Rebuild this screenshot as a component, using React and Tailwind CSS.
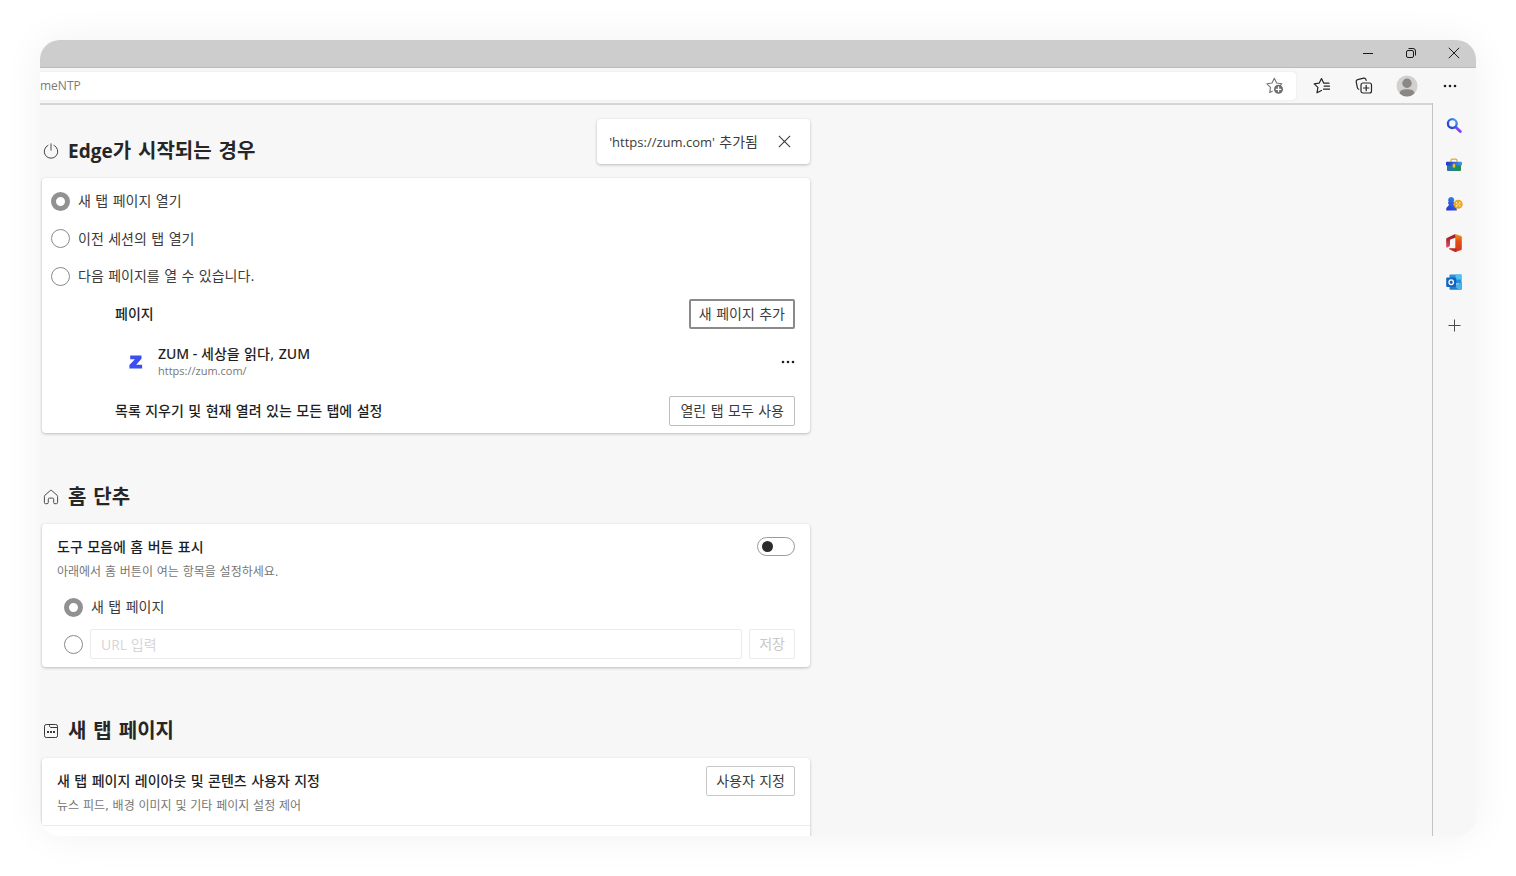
import React, { useState } from "react";

const LATIN = "font-['Open_Sans','Noto_Sans_CJK_KR',sans-serif]";
const LATIN_TITLE = "font-['Noto_Sans','Noto_Sans_CJK_KR',sans-serif]";
const HANGUL = "font-['DejaVu_Sans','Noto_Sans_CJK_KR',sans-serif]";

function StarPlusIcon() {
  return (
    <svg width="18" height="18" viewBox="0 0 18 18" fill="none" stroke="#767676" strokeWidth="1.1" strokeLinejoin="round" strokeLinecap="round">
      <path d="M6.3 14.2l-2.600 1.400.8-5.300L.9 6.800l5.100-.8L8.300 1.300 10.600 6l5.200.8-1.400 1.300" />
      <circle cx="12.500" cy="12.300" r="4.500" fill="#6e6e6e" stroke="none" />
      <path d="M12.500 10v4.600M10.200 12.300h4.600" stroke="#fff" strokeWidth="1.300" />
    </svg>
  );
}

function FavoritesIcon() {
  return (
    <svg width="18" height="18" viewBox="0 0 18 18" fill="none" stroke="#262626" strokeWidth="1.2" strokeLinejoin="round" strokeLinecap="round">
      <path d="M8.500 13.500L4 15.800l.9-5.400L1.200 6.900l4.900-.7L8.500 1.600l2.300 4.600H16M11.200 9.200H16.500M10.500 12.200h6" />
    </svg>
  );
}

function CollectionsIcon() {
  return (
    <svg width="18" height="18" viewBox="0 0 18 18" fill="none" stroke="#262626" strokeWidth="1.2" strokeLinejoin="round" strokeLinecap="round">
      <rect x="6" y="6" width="10.500" height="10" rx="2" />
      <path d="M11.200 8.300v5.400M8.500 11h5.400" />
      <path d="M3.800 12.300c-.7-.3-1.200-.8-1.400-1.500L1.200 4.800C1 3.800 1.600 3 2.700 2.700L8.700 1.200c1-.2 1.900.3 2.200 1.300l.3.900" />
    </svg>
  );
}

function Avatar() {
  return (
    <svg width="22" height="22" viewBox="0 0 22 22">
      <defs>
        <clipPath id="avatar-clip">
          <circle cx="11" cy="11" r="10.500" />
        </clipPath>
      </defs>
      <circle cx="11" cy="11" r="10.500" fill="#d2d0ce" />
      <g clipPath="url(#avatar-clip)" fill="#8a8886">
        <circle cx="11" cy="8.300" r="4.700" />
        <path d="M3.600 18c.6-2.800 3-3.800 7.400-3.800s6.800 1 7.400 3.800v4H3.600z" />
      </g>
    </svg>
  );
}

function Dots() {
  return (
    <svg width="14" height="4" viewBox="0 0 14 4" fill="#1f1f1f">
      <circle cx="2" cy="2" r="1.300" />
      <circle cx="7" cy="2" r="1.300" />
      <circle cx="12" cy="2" r="1.300" />
    </svg>
  );
}

function CloseIcon({ size, color }) {
  return (
    <svg width={size} height={size} viewBox="0 0 12 12" stroke={color} strokeWidth="1" fill="none">
      <path d="M.8.8l10.400 10.400M11.200.8L.8 11.200" />
    </svg>
  );
}

function SearchIcon() {
  return (
    <svg width="16" height="16" viewBox="0 0 16 16" fill="none">
      <defs>
        <linearGradient id="lens" x1="1" y1="10" x2="10" y2="2" gradientUnits="userSpaceOnUse">
          <stop stopColor="#2236c8" />
          <stop offset=".6" stopColor="#2f62dc" />
          <stop offset="1" stopColor="#4a9be8" />
        </linearGradient>
      </defs>
      <path d="M9.800 9.300l4.500 4.300" stroke="#8a3ff0" strokeWidth="2.800" strokeLinecap="round" />
      <circle cx="6.300" cy="5.600" r="4.400" stroke="url(#lens)" strokeWidth="2.300" />
    </svg>
  );
}

function ToolboxIcon() {
  return (
    <svg width="16" height="16" viewBox="0 0 16 16" fill="none">
      <defs>
        <linearGradient id="box" x1="0" y1="0" x2="16" y2="0" gradientUnits="userSpaceOnUse">
          <stop stopColor="#2b6fc0" />
          <stop offset=".55" stopColor="#1f8a72" />
          <stop offset="1" stopColor="#2a8a3c" />
        </linearGradient>
        <linearGradient id="lid" x1="0" y1="0" x2="16" y2="0" gradientUnits="userSpaceOnUse">
          <stop stopColor="#2433c8" />
          <stop offset="1" stopColor="#3f9be6" />
        </linearGradient>
      </defs>
      <path d="M5 5V3.500c0-.9.500-1.300 1.300-1.300h3.400c.8 0 1.300.4 1.300 1.300V5" stroke="#e6a52a" strokeWidth="1.200" />
      <rect x="1" y="7" width="14" height="7" rx=".8" fill="url(#box)" />
      <rect x="0" y="4.700" width="16" height="3.800" rx=".8" fill="url(#lid)" />
      <rect x="6.700" y="6.800" width="2.600" height="4" rx="1.100" fill="#f2b92e" />
    </svg>
  );
}

function GamesIcon() {
  return (
    <svg width="17" height="16" viewBox="0 0 17 16" fill="none">
      <defs>
        <linearGradient id="pawn" x1="0" y1="14" x2="9" y2="2" gradientUnits="userSpaceOnUse">
          <stop stopColor="#2b2fd0" />
          <stop offset="1" stopColor="#3286e0" />
        </linearGradient>
      </defs>
      <path d="M5.200.9a3 3 0 012.300 5l.9.300v1.500h-.8c.1 1.800.8 2.500 2.100 3.300.8.600 1.100 1.200 1.100 3.500H.2c0-2.300.2-3 1-3.600 1.200-.8 1.600-1.500 1.700-3.200h-.9V6.200l.9-.3a3 3 0 012.300-5z" fill="url(#pawn)" />
      <circle cx="12.200" cy="8.300" r="4.500" fill="#e8a526" />
      <g fill="#fff0bd">
        <circle cx="10.600" cy="6.900" r=".8" />
        <circle cx="13.700" cy="6.900" r=".8" />
        <circle cx="12.200" cy="8.400" r=".7" />
        <circle cx="10.700" cy="9.900" r=".8" />
        <circle cx="13.800" cy="9.800" r=".8" />
      </g>
    </svg>
  );
}

function OfficeIcon() {
  return (
    <svg width="16" height="18" viewBox="0 0 16 18" fill="none">
      <defs>
        <linearGradient id="office-r" x1="12" y1="0" x2="12" y2="18" gradientUnits="userSpaceOnUse">
          <stop stopColor="#f59a1c" />
          <stop offset=".4" stopColor="#e0501a" />
          <stop offset="1" stopColor="#d8331c" />
        </linearGradient>
        <linearGradient id="office-l" x1="2" y1="3" x2="4" y2="14" gradientUnits="userSpaceOnUse">
          <stop stopColor="#a01d22" />
          <stop offset="1" stopColor="#e5566b" />
        </linearGradient>
      </defs>
      <path d="M9.300 0L.9 4C.4 4.300.2 4.700.2 5.300v7.400c0 .8.700 1.100 1.300.8l1.700-.9c.5-.3.800-.8.800-1.400V6.500c0-.7.3-1.100.9-1.300l5.600-1.600z" fill="url(#office-l)" />
      <path d="M9.300 0l5.300 1.700c.8.300 1.200.8 1.200 1.600v11.400c0 .8-.4 1.300-1.200 1.600L9.300 18V0z" fill="url(#office-r)" />
      <path d="M3.400 14.200h7V18H9.300c-.5 0-1-.1-1.400-.4l-4.400-2.400c-.6-.3-.5-1-.1-1z" fill="#c42b1c" />
    </svg>
  );
}

function OutlookIcon() {
  return (
    <svg width="16" height="16" viewBox="0 0 16 16" fill="none">
      <rect x="3.500" y=".5" width="12" height="9" rx=".8" fill="#2a8fdc" />
      <rect x="9.500" y=".5" width="6" height="5" fill="#52c3f3" />
      <path d="M3.500 8.500l6 3.500 6.300-4v6.800c0 .5-.4.900-.9.900H4.400c-.5 0-.9-.4-.9-.9z" fill="#1e7fd0" />
      <path d="M15.800 8v6.800c0 .5-.4.900-.9.900H13L8 11.900z" fill="#48b5ee" />
      <rect x=".2" y="3.500" width="10" height="9.500" rx="1" fill="#1565c0" />
      <ellipse cx="5.200" cy="8.200" rx="2.200" ry="2.400" stroke="#fff" strokeWidth="1.300" />
    </svg>
  );
}

function PowerIcon() {
  return (
    <svg width="16" height="16" viewBox="0 0 16 16" fill="none" stroke="#4a4a4a" strokeWidth="1" strokeLinecap="round">
      <path d="M8 .8v6.400M5 2.300a6.800 6.800 0 106 0" />
    </svg>
  );
}

function HomeIcon() {
  return (
    <svg width="16" height="16" viewBox="0 0 16 16" fill="none" stroke="#4a4a4a" strokeWidth="1" strokeLinejoin="round">
      <path d="M7.300 1.500c.4-.3 1-.3 1.400 0l5.300 4.700c.4.300.6.700.6 1.200v6.100c0 .8-.4 1.200-1.200 1.200h-1.600c-.8 0-1.100-.4-1.100-1.200v-3.300c0-.7-.4-1.100-1.100-1.100H6.400c-.7 0-1.100.4-1.100 1.100v3.300c0 .8-.4 1.200-1.200 1.200H2.600c-.8 0-1.200-.4-1.200-1.200V7.400c0-.5.200-.9.600-1.200z" />
    </svg>
  );
}

function NewTabIcon() {
  return (
    <svg width="16" height="16" viewBox="0 0 16 16" fill="none" stroke="#3a3a3a" strokeWidth="1">
      <rect x="1.500" y="1.500" width="13" height="13" rx="1.800" />
      <path d="M6.500 1.500v1.200c0 1 .5 1.800 1.500 1.800h6.500" />
      <path d="M4 9h2M7 9h2M10 9h2" strokeWidth="1.800" />
    </svg>
  );
}

function SectionTitle({ icon, children }) {
  return (
    <h2 className={`mb-3 flex h-[30px] items-center gap-[9px] pl-px text-xl leading-7 font-bold text-[#262626] ${HANGUL}`}>
      <span className="shrink-0">{icon}</span>
      <span>{children}</span>
    </h2>
  );
}

function Radio({ id, name, label, checked, onChange }) {
  return (
    <input
      type="radio"
      id={id}
      name={name}
      aria-label={label}
      checked={checked}
      onChange={onChange}
      className="h-[19px] w-[19px] shrink-0 appearance-none rounded-full border border-[#8a8a8a] bg-white checked:border-[5px] checked:border-[#919191]"
    />
  );
}

const button = "h-[30px] shrink-0 rounded-[2px] bg-white text-sm leading-5 text-[#3b3b3b]";
const card = "rounded-[4px] bg-white shadow-[0_1px_3px_rgba(0,0,0,0.25)]";
const rowTitle = "text-sm leading-5 font-medium text-[#1f1f1f]";

function StartupSection() {
  const [choice, setChoice] = useState(0);
  const options = ["새 탭 페이지 열기", "이전 세션의 탭 열기", "다음 페이지를 열 수 있습니다."];
  return (
    <section>
      <SectionTitle icon={<PowerIcon />}>
        <span className={`text-[19px] ${LATIN}`}>Edge</span>가 시작되는 경우
      </SectionTitle>
      <div className={`${card} pt-1 pb-0.5`}>
        {options.map((text, i) => (
          <div key={text} className="flex h-[37px] items-center gap-2 pl-[9px] odd:h-[38px]">
            <Radio id={`startup-${i}`} name="startup" checked={choice === i} onChange={() => setChoice(i)} />
            <label htmlFor={`startup-${i}`} className="text-sm leading-5 text-[#3b3b3b]">{text}</label>
          </div>
        ))}
        <div className="pr-[15px] pl-[73px]">
          <div className="flex h-[38px] items-center justify-between">
            <h3 className={rowTitle}>페이지</h3>
            <button type="button" className={`${button} border-2 border-[#8a8a8a] px-2`}>새 페이지 추가</button>
          </div>
          <div className="flex h-[58px] items-center pl-3.5">
            <svg width="14" height="14" viewBox="0 0 14 14" className="shrink-0" fill="#3b4ef0">
              <path d="M1.200.4h11.300v3.300L7.200 9.800h5.900v3.800H.4v-3.500L5.900 4.200H1.200z" />
            </svg>
            <div className="ml-[15px] flex-1 pt-0.5">
              <p className={`${rowTitle} !leading-4`}>
                <span className={LATIN_TITLE}>ZUM - </span>세상을 읽다, <span className={LATIN_TITLE}>ZUM</span>
              </p>
              <p className={`text-[11px] leading-[18px] text-[#767676] ${LATIN}`}>https://zum.com/</p>
            </div>
            <button type="button" aria-label="기타 작업" className="flex h-6 items-center">
              <Dots />
            </button>
          </div>
          <div className="flex h-10 items-center justify-between">
            <h3 className={rowTitle}>목록 지우기 및 현재 열려 있는 모든 탭에 설정</h3>
            <button type="button" className={`${button} border border-[#bdbdbd] px-2.5`}>열린 탭 모두 사용</button>
          </div>
        </div>
      </div>
    </section>
  );
}

function HomeSection() {
  const [on, setOn] = useState(false);
  const [choice, setChoice] = useState(0);
  return (
    <section>
      <SectionTitle icon={<HomeIcon />}>홈 단추</SectionTitle>
      <div className={`${card} px-[15px] pt-[13px] pb-2`}>
        <div className="flex items-start justify-between">
          <div>
            <label htmlFor="show-home" className={`block ${rowTitle}`}>도구 모음에 홈 버튼 표시</label>
            <p className="mt-[5px] text-xs leading-5 text-[#767676]">아래에서 홈 버튼이 여는 항목을 설정하세요.</p>
          </div>
          <input
            id="show-home"
            type="checkbox"
            role="switch"
            checked={on}
            onChange={() => setOn(!on)}
            className="h-[19px] w-[38px] shrink-0 appearance-none rounded-full border border-[#9a9a9a] bg-white before:mt-[3px] before:ml-1 before:block before:h-[11px] before:w-[11px] before:rounded-full before:bg-[#2b2b2b] checked:before:ml-5"
          />
        </div>
        <div className="mt-1.5 flex h-[38px] items-center gap-2 pl-[7px]">
          <Radio id="home-newtab" name="home" checked={choice === 0} onChange={() => setChoice(0)} />
          <label htmlFor="home-newtab" className="text-sm leading-5 text-[#3b3b3b]">새 탭 페이지</label>
        </div>
        <div className="mt-[3px] flex items-center gap-[7px] pl-[7px]">
          <Radio id="home-url" name="home" label="URL 입력" checked={choice === 1} onChange={() => setChoice(1)} />
          <input
            type="text"
            aria-label="URL 입력"
            placeholder="URL 입력"
            disabled
            className={`h-[30px] min-w-0 flex-1 rounded-[2px] border border-[#ebebeb] bg-white px-2.5 text-sm placeholder:text-[#d6d6d6] ${LATIN}`}
          />
          <button type="button" disabled className={`${button} border border-[#ebebeb] px-[9px] !text-[#c8c8c8]`}>저장</button>
        </div>
      </div>
    </section>
  );
}

function NewTabSection() {
  return (
    <section>
      <SectionTitle icon={<NewTabIcon />}>새 탭 페이지</SectionTitle>
      <div className={`${card} pb-16`}>
        <div className="flex items-start justify-between border-b border-[#ebebeb] px-[15px] pt-2 pb-[9px]">
          <div className="mt-[5px]">
            <h3 className={rowTitle}>새 탭 페이지 레이아웃 및 콘텐츠 사용자 지정</h3>
            <p className="mt-[5px] text-xs leading-5 text-[#767676]">뉴스 피드, 배경 이미지 및 기타 페이지 설정 제어</p>
          </div>
          <button type="button" className={`${button} border border-[#c8c8c8] px-[9px]`}>사용자 지정</button>
        </div>
      </div>
    </section>
  );
}

function TitleBar() {
  return (
    <header className="flex h-7 shrink-0 items-center justify-end gap-[31px] border-b border-[#bababa] bg-[#cdcdcd] pr-4 pb-0.5">
      <button type="button" aria-label="최소화">
        <svg width="12" height="12" viewBox="0 0 12 12" stroke="#1a1a1a"><path d="M1 6.500h10" /></svg>
      </button>
      <button type="button" aria-label="이전 크기로 복원">
        <svg width="12" height="12" viewBox="0 0 12 12" fill="none" stroke="#1a1a1a">
          <rect x="1.500" y="3.500" width="7" height="7" rx="1.500" />
          <path d="M3.500 1.500h4.500a2.500 2.500 0 012.500 2.500v4.500" />
        </svg>
      </button>
      <button type="button" aria-label="닫기"><CloseIcon size={12} color="#1a1a1a" /></button>
    </header>
  );
}

function Toolbar() {
  return (
    <div className="flex h-[35px] shrink-0 items-center bg-[#f7f7f7] pt-px pr-[19px]">
      <div className="flex h-7 min-w-0 flex-1 items-center rounded-r-[4px] bg-white pr-3 shadow-[0_0_2px_rgba(0,0,0,0.1)]">
        <input
          type="text"
          aria-label="주소 표시줄"
          defaultValue="meNTP"
          className={`min-w-0 flex-1 bg-transparent text-xs text-[#7a7a7a] outline-none ${LATIN}`}
        />
        <button type="button" aria-label="즐겨찾기에 추가"><StarPlusIcon /></button>
      </div>
      <div className="ml-[17px] flex items-center">
        <button type="button" aria-label="즐겨찾기" className="mr-6"><FavoritesIcon /></button>
        <button type="button" aria-label="컬렉션" className="mr-[23px]"><CollectionsIcon /></button>
        <button type="button" aria-label="프로필" className="mr-[25px]"><Avatar /></button>
        <button type="button" aria-label="설정 및 기타" className="flex h-6 items-center"><Dots /></button>
      </div>
    </div>
  );
}

function Sidebar() {
  const items = [
    ["검색", <SearchIcon />],
    ["도구", <ToolboxIcon />],
    ["게임", <GamesIcon />],
    ["Office", <OfficeIcon />],
    ["Outlook", <OutlookIcon />],
  ];
  return (
    <aside className="flex w-11 shrink-0 flex-col items-center border-l border-[#c3c3c3] bg-[#f7f7f7] pt-[3px] pr-px">
      {items.map(([label, icon]) => (
        <button key={label} type="button" aria-label={label} className="flex h-[39px] w-8 items-center justify-center">{icon}</button>
      ))}
      <button type="button" aria-label="추가" className="mt-1 flex h-10 w-8 items-center justify-center">
        <svg width="13" height="13" viewBox="0 0 13 13" stroke="#4a4a4a"><path d="M6.500.5v12M.5 6.500h12" /></svg>
      </button>
    </aside>
  );
}

export default function App() {
  const [toast, setToast] = useState(true);
  return (
    <div className={`h-screen bg-white p-10 ${HANGUL}`}>
      <div className="flex h-full flex-col overflow-hidden rounded-[20px] bg-[#f7f7f7] shadow-[0_0_40px_rgba(0,0,0,0.06)]">
        <TitleBar />
        <Toolbar />
        <div className="flex min-h-0 flex-1">
          <main className="min-w-0 flex-1 overflow-hidden border-t-2 border-[#d6d6d6] pl-0.5">
            <div className="relative flex max-w-3xl flex-col gap-[49px] pt-[31px]">
              {toast && (
                <div role="status" className="absolute top-3.5 right-0 flex h-[45px] items-center gap-5 rounded-[4px] bg-white pr-[19px] pl-3 shadow-[0_1px_3px_rgba(0,0,0,0.25)]">
                  <p className="text-sm leading-5 text-[#3b3b3b]">
                    <span className={`text-[13px] ${LATIN}`}>'https://zum.com'</span> 추가됨
                  </p>
                  <button type="button" aria-label="알림 닫기" onClick={() => setToast(false)}>
                    <CloseIcon size={13} color="#3b3b3b" />
                  </button>
                </div>
              )}
              <StartupSection />
              <HomeSection />
              <NewTabSection />
            </div>
          </main>
          <Sidebar />
        </div>
      </div>
    </div>
  );
}
